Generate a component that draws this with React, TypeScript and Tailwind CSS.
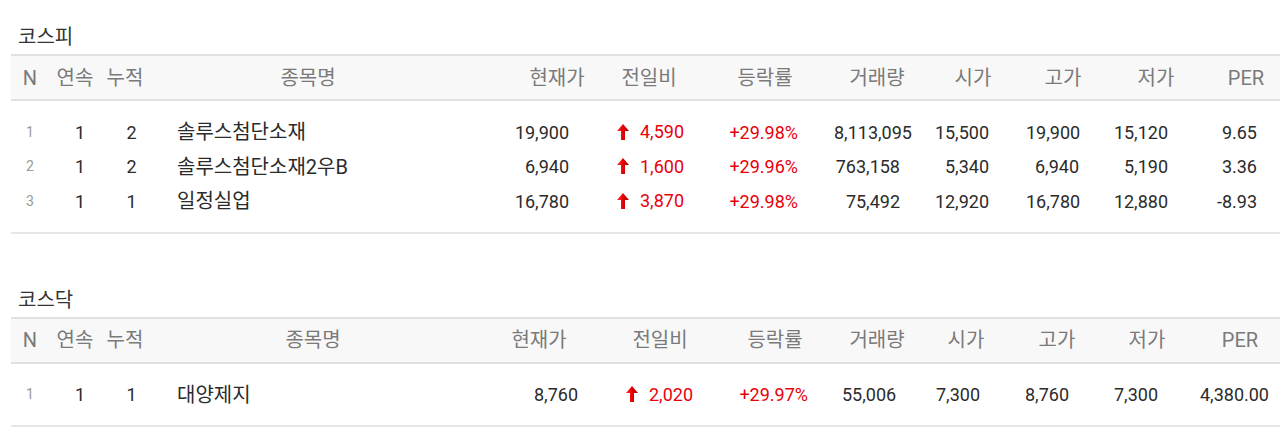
import React from "react";

interface Col {
  label: string;
  w: string; // width class
  th: string; // header padding classes
  td: string; // data alignment/padding classes
}

interface Row {
  n: number;
  streak: number;
  total: number;
  name: string;
  price: string;
  change: string;
  rate: string;
  volume: string;
  open: string;
  high: string;
  low: string;
  per: string;
}

const kospiCols: Col[] = [
  { label: "N", w: "w-[38px]", th: "text-center", td: "text-center" },
  { label: "연속", w: "w-[56px]", th: "text-center pr-[4px]", td: "text-center pl-[6px]" },
  { label: "누적", w: "w-[40px]", th: "text-center", td: "text-center pl-[13px]" },
  { label: "종목명", w: "w-[367px]", th: "text-center pr-[41px]", td: "text-left pl-[32px]" },
  { label: "현재가", w: "w-[90px]", th: "text-center", td: "text-right pr-[33px]" },
  { label: "전일비", w: "w-[94px]", th: "text-center", td: "text-right pr-[12px]" },
  { label: "등락률", w: "w-[138px]", th: "text-center", td: "text-right pr-[36px]" },
  { label: "거래량", w: "w-[86px]", th: "text-center", td: "text-right pr-[20px]" },
  { label: "시가", w: "w-[106px]", th: "text-center", td: "text-right pr-[37px]" },
  { label: "고가", w: "w-[74px]", th: "text-center", td: "text-right pr-[21px]" },
  { label: "저가", w: "w-[112px]", th: "text-center", td: "text-right pr-[44px]" },
  { label: "PER", w: "w-[68px]", th: "text-center", td: "text-right pr-[23px]" },
];

const kosdaqCols: Col[] = [
  { label: "N", w: "w-[38px]", th: "text-center", td: "text-center" },
  { label: "연속", w: "w-[56px]", th: "text-center pr-[4px]", td: "text-center pl-[6px]" },
  { label: "누적", w: "w-[40px]", th: "text-center", td: "text-center pl-[13px]" },
  { label: "종목명", w: "w-[321px]", th: "text-center pl-[15px]", td: "text-left pl-[32px]" },
  { label: "현재가", w: "w-[146px]", th: "text-center", td: "text-right pr-[34px]" },
  { label: "전일비", w: "w-[96px]", th: "text-center", td: "text-right pr-[15px]" },
  { label: "등락률", w: "w-[134px]", th: "text-center", td: "text-right pr-[34px]" },
  { label: "거래량", w: "w-[70px]", th: "text-center", td: "text-right pr-[22px]" },
  { label: "시가", w: "w-[108px]", th: "text-center", td: "text-right pr-[40px]" },
  { label: "고가", w: "w-[74px]", th: "text-center", td: "text-right pr-[25px]" },
  { label: "저가", w: "w-[106px]", th: "text-center", td: "text-right pr-[42px]" },
  { label: "PER", w: "w-[80px]", th: "text-center", td: "text-right pr-[23px]" },
];

const kospiRows: Row[] = [
  { n: 1, streak: 1, total: 2, name: "솔루스첨단소재", price: "19,900", change: "4,590", rate: "+29.98%", volume: "8,113,095", open: "15,500", high: "19,900", low: "15,120", per: "9.65" },
  { n: 2, streak: 1, total: 2, name: "솔루스첨단소재2우B", price: "6,940", change: "1,600", rate: "+29.96%", volume: "763,158", open: "5,340", high: "6,940", low: "5,190", per: "3.36" },
  { n: 3, streak: 1, total: 1, name: "일정실업", price: "16,780", change: "3,870", rate: "+29.98%", volume: "75,492", open: "12,920", high: "16,780", low: "12,880", per: "-8.93" },
];

const kosdaqRows: Row[] = [
  { n: 1, streak: 1, total: 1, name: "대양제지", price: "8,760", change: "2,020", rate: "+29.97%", volume: "55,006", open: "7,300", high: "8,760", low: "7,300", per: "4,380.00" },
];

// Red up arrow used in 전일비
const UpArrow = () => (
  <svg width="12" height="16" viewBox="0 0 12 16" className="inline-block align-middle">
    <defs>
      <linearGradient id="upg" x1="0" y1="0" x2="1" y2="0">
        <stop offset="0" stopColor="#ff3030" />
        <stop offset="0.55" stopColor="#e00000" />
        <stop offset="1" stopColor="#a80000" />
      </linearGradient>
    </defs>
    <path d="M6 0 L12 7 H8 V16 H4 V7 H0 Z" fill="url(#upg)" />
  </svg>
);

function StockTable({ title, cols, rows }: { title: string; cols: Col[]; rows: Row[] }) {
  return (
    <div>
      <div className="pl-[7px] text-[20px] leading-[30px] text-[#333] mb-[2px]">{title}</div>
      <table className="table-fixed border-collapse w-[1269px]">
        <colgroup>
          {cols.map((c) => (
            <col key={c.label} className={c.w} />
          ))}
        </colgroup>
        <thead>
          <tr className="bg-[#f8f8f8]">
            {cols.map((c) => (
              <th
                key={c.label}
                className={`h-[45px] border-y-2 border-[#e1e1e1] font-normal text-[20px] text-[#7a7a7a] ${c.th}`}
              >
                {c.label}
              </th>
            ))}
          </tr>
        </thead>
        <tbody className="text-[18px] text-[#2b2b2b]">
          <tr className="h-[15px]">
            <td colSpan={12}></td>
          </tr>
          {rows.map((r) => (
            <tr key={r.n} className="h-[34.5px]">
              <td className={`${cols[0].td} text-[14px] text-[#999]`}>{r.n}</td>
              <td className={cols[1].td}>{r.streak}</td>
              <td className={cols[2].td}>{r.total}</td>
              <td className={`${cols[3].td} text-[20px]`}>{r.name}</td>
              <td className={cols[4].td}>{r.price}</td>
              <td className={`${cols[5].td} text-[#e8000b]`}>
                <span className="inline-flex items-center gap-[11px]">
                  <UpArrow />
                  <span>{r.change}</span>
                </span>
              </td>
              <td className={`${cols[6].td} text-[#e8000b]`}>{r.rate}</td>
              <td className={cols[7].td}>{r.volume}</td>
              <td className={cols[8].td}>{r.open}</td>
              <td className={cols[9].td}>{r.high}</td>
              <td className={cols[10].td}>{r.low}</td>
              <td className={cols[11].td}>{r.per}</td>
            </tr>
          ))}
          <tr className="h-[14px] border-b-2 border-[#e6e6e6]">
            <td colSpan={12}></td>
          </tr>
        </tbody>
      </table>
    </div>
  );
}

export default function App() {
  return (
    <div className="bg-white min-h-screen pl-[11px] pt-[22px] font-['Roboto','Noto_Sans_CJK_KR',sans-serif] overflow-hidden">
      <div className="flex flex-col gap-[51px]">
        <StockTable title="코스피" cols={kospiCols} rows={kospiRows} />
        <StockTable title="코스닥" cols={kosdaqCols} rows={kosdaqRows} />
      </div>
    </div>
  );
}
